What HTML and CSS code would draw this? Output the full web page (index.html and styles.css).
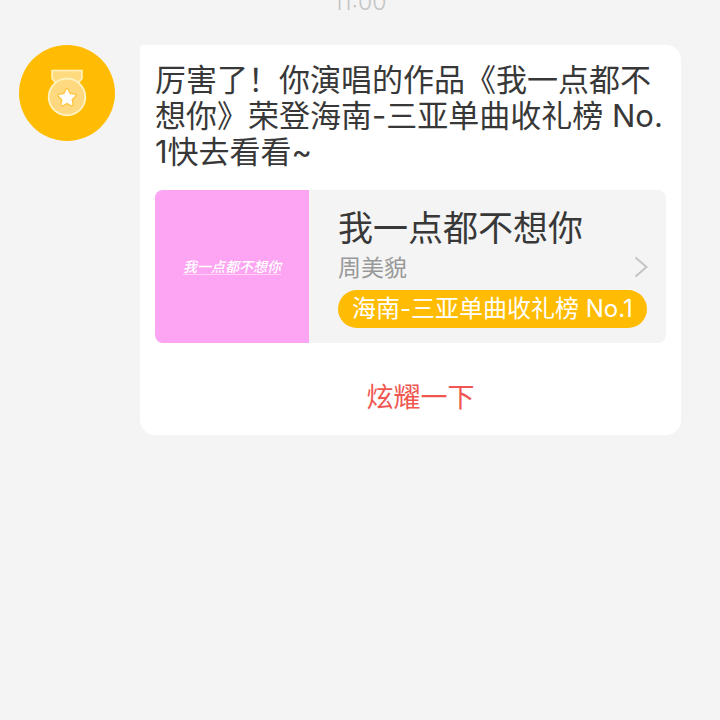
FILE: index.html
```
<!DOCTYPE html>
<html lang="zh-CN">

<head>
  <meta charset="UTF-8">
  <meta name="viewport" content="width=device-width, initial-scale=1">
  <title>消息</title>
  <link rel="stylesheet" href="styles.css">
</head>

<body>

  <main class="chat">
    <time class="chat-time">11:00</time>

    <div class="message">
      <!-- Medal avatar -->
      <div class="avatar">
        <svg class="avatar-icon" viewBox="0 0 48 48" aria-hidden="true">
          <path d="M9 1.500h30v8l-5 6h-20l-5-6z" fill="#ffdb80" stroke="#fff3c4" stroke-width="1.500" />
          <circle cx="24" cy="28" r="18.300" fill="#ffd97f" stroke="#fff3c4" stroke-width="1.800" />
          <path d="M24 21l2.300 4.800 5.300.7-3.900 3.700 1 5.300-4.700-2.600-4.700 2.600 1-5.300-3.900-3.700 5.300-.7z" fill="#fff" stroke="#ffc338" stroke-width="4" stroke-linejoin="round" />
          <path d="M24 21l2.300 4.800 5.300.7-3.900 3.700 1 5.300-4.700-2.600-4.700 2.600 1-5.300-3.900-3.700 5.300-.7z" fill="#fff" stroke="#fff" stroke-width="1.500" stroke-linejoin="round" />
        </svg>
      </div>

      <div class="bubble">
        <p class="bubble-text">厉害了！你演唱的作品《我一点都不想你》荣登海南-三亚单曲收礼榜 No.<wbr>1快去看看~</p>

        <!-- Song card -->
        <a class="song" href="#">
          <span class="song-cover"><span class="song-cover-text">我一点都不想你</span></span>
          <span class="song-info">
            <span class="song-name">我一点都不想你</span>
            <span class="song-singer">周美貌</span>
            <span class="song-rank">海南-三亚单曲收礼榜 No.1</span>
          </span>
          <svg class="song-arrow" viewBox="0 0 14 22" aria-hidden="true">
            <path d="M1.500 1.500l11 9.500-11 9.500" fill="none" stroke="#c4c4c4" stroke-width="2" />
          </svg>
        </a>

        <button class="share-button" type="button">炫耀一下</button>
      </div>
    </div>
  </main>

</body>

</html>
```

FILE: styles.css
```
body {
  margin: 0;
  background-color: #f4f4f4;
  color: #383838;
  font-family: Inter, "Noto Sans CJK SC", sans-serif;
}

.chat {
  display: flex;
  flex-direction: column;
  overflow: hidden;
}

/* Scrolled partly out of view */
.chat-time {
  margin-top: -14px;
  line-height: 32px;
  font-size: 23px;
  font-weight: 300;
  color: #c4c4c4;
  text-align: center;
}

.message {
  display: flex;
  align-items: flex-start;
  gap: 25px;
  padding: 27px 39px 27px 19px;
}

.avatar {
  display: flex;
  flex-shrink: 0;
  align-items: center;
  justify-content: center;
  width: 96px;
  height: 96px;
  border-radius: 50%;
  background-color: #ffbc02;
}

.avatar-icon {
  width: 48px;
  height: 48px;
}

.bubble {
  flex: 1;
  min-width: 0;
  padding: 17px 15px;
  border-radius: 3px 15px 15px 15px;
  background-color: #fff;
}

.bubble-text {
  margin: 0 0 20px;
  font-size: 31px;
  line-height: 36px;
}

/* Song card */
.song {
  display: flex;
  align-items: center;
  overflow: hidden;
  padding-right: 18px;
  border-radius: 8px;
  background-color: #f4f4f4;
  color: inherit;
  text-decoration: none;
}

.song-cover {
  display: flex;
  flex-shrink: 0;
  align-items: center;
  justify-content: center;
  width: 154px;
  height: 153px;
  background-color: #fda4f2;
}

.song-cover-text {
  border-bottom: 1px solid #fed2f9;
  color: #fff;
  font-size: 14px;
  font-style: italic;
  font-weight: 500;
  line-height: 15px;
}

.song-info {
  display: flex;
  flex: 1;
  flex-direction: column;
  align-items: flex-start;
  min-width: 0;
  padding-left: 29px;
}

.song-name {
  font-size: 35px;
  line-height: 44px;
}

.song-singer {
  margin-bottom: 4px;
  color: #999;
  font-size: 23px;
  line-height: 36px;
}

.song-rank {
  padding: 0 14px;
  border-radius: 19px;
  background-color: #ffbc02;
  color: #fff;
  font-size: 24px;
  line-height: 38px;
  white-space: nowrap;
}

.song-arrow {
  flex-shrink: 0;
  width: 14px;
  height: 22px;
}

.share-button {
  display: block;
  width: 100%;
  margin-top: 35px;
  padding: 0 0 0 20px;
  border: none;
  background: none;
  color: #f0564f;
  font-family: inherit;
  font-size: 27px;
  line-height: 40px;
  cursor: pointer;
}
```
